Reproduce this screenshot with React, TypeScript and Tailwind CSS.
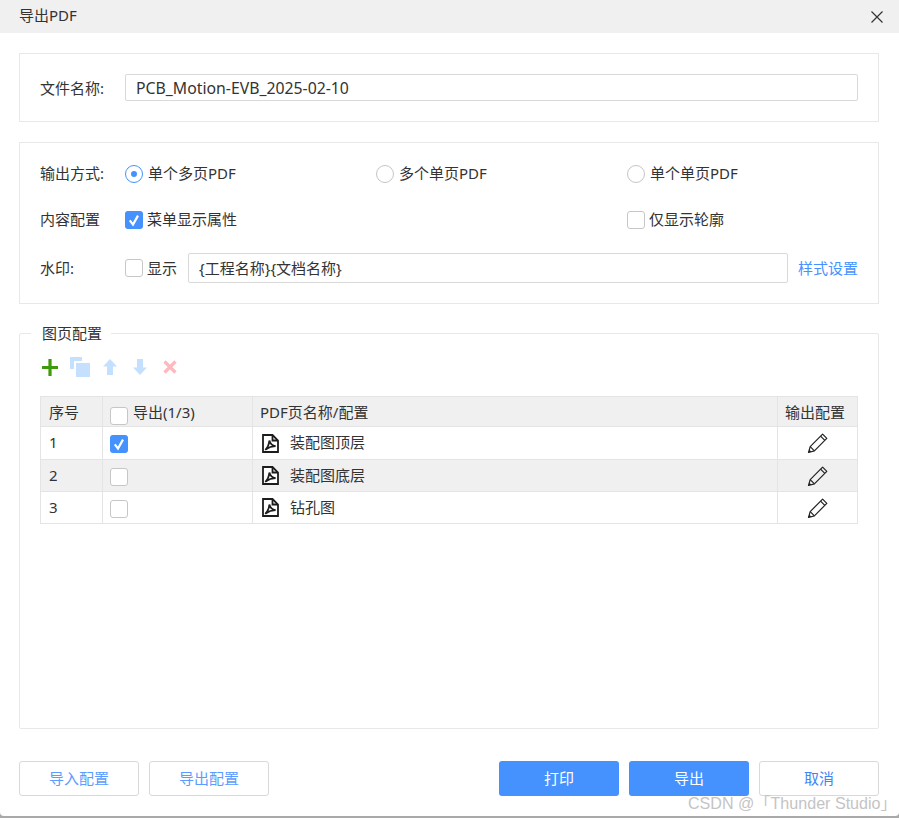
import React from "react";

const font = "font-['Noto_Sans','Noto_Sans_CJK_SC',sans-serif]";

const CheckBox = ({ checked = false }: { checked?: boolean }) =>
  checked ? (
    <span className="flex h-[18px] w-[18px] shrink-0 items-center justify-center rounded-[3px] bg-[#4592ff]">
      <svg width="14" height="14" viewBox="0 0 14 14" fill="none">
        <path d="M2.8 7.4 L6 11.6 L11 2.6" stroke="#fff" strokeWidth="2.2" />
      </svg>
    </span>
  ) : (
    <span className="block h-[18px] w-[18px] shrink-0 rounded-[3px] border border-[#c6c6c6] bg-white" />
  );

const Radio = ({ checked = false }: { checked?: boolean }) => (
  <span
    className={`flex h-[18px] w-[18px] shrink-0 items-center justify-center rounded-full border ${
      checked ? "border-[#4592ff]" : "border-[#c6c6c6]"
    }`}
  >
    {checked && <span className="h-1.5 w-1.5 rounded-full bg-[#4592ff]" />}
  </span>
);

const PdfIcon = () => (
  <svg width="17" height="19" viewBox="0 0 17 19" fill="none" className="shrink-0">
    <path d="M1 1 H10.5 L16 6.5 V18 H1 Z" stroke="#1c1c1c" strokeWidth="1.8" fill="#fff" />
    <path d="M10.5 1 V6.5 H16" stroke="#1c1c1c" strokeWidth="1.8" />
    <path
      d="M3.2 15.8 C5.2 14 7 10.5 7.4 6.5 C8.2 9.8 9.8 11.6 13.6 12.2 C10.4 12.2 6.6 13.4 3.2 15.8 Z"
      stroke="#1c1c1c"
      strokeWidth="1.8"
    />
  </svg>
);

const PencilIcon = () => (
  <svg width="22" height="22" viewBox="0 0 22 22" fill="none">
    <path d="M1.5 20.5 L3.2 14.6 L15.6 2.2 L19.8 6.4 L7.4 18.8 Z" stroke="#222" strokeWidth="1.2" strokeLinejoin="round" />
    <path d="M13.6 4.2 L17.8 8.4 M3.2 14.6 L7.4 18.8" stroke="#222" strokeWidth="1.2" />
    <path d="M1.5 20.5 L2.3 17.6 L4.4 19.7 Z" fill="#222" />
  </svg>
);

const Btn = ({ label, primary = false, strong = false }: { label: string; primary?: boolean; strong?: boolean }) => (
  <button
    className={`h-[35px] w-[120px] rounded-[3px] pb-px text-[15px] ${
      primary
        ? "bg-[#4592ff] text-white"
        : `border border-[#d9d9d9] bg-white ${strong ? "text-[#3f86f5]" : "text-[#5c9bff]"}`
    }`}
  >
    {label}
  </button>
);

const rows = [
  { no: 1, name: "装配图顶层", on: true, h: "h-[33px]", bg: "bg-white" },
  { no: 2, name: "装配图底层", on: false, h: "h-[32px]", bg: "bg-[#f0f0f0]" },
  { no: 3, name: "钻孔图", on: false, h: "h-[32px]", bg: "bg-white" },
];

export default function App() {
  return (
    <div className={`${font} h-[818px] w-[899px] overflow-hidden bg-[#a9a9a9] text-[15px] leading-5 text-[#333]`}>
      <div className="relative h-[816px] rounded-b-[4px] bg-white">
        <div className="flex h-[33px] items-center justify-between bg-[#f0f0f0] pl-[19px] pr-[15px]">
          <span className="pb-1">导出PDF</span>
          <svg width="14" height="14" viewBox="0 0 14 14" fill="none">
            <path d="M1.5 1.5 L12.5 12.5 M12.5 1.5 L1.5 12.5" stroke="#333" strokeWidth="1.2" />
          </svg>
        </div>

        <div className="pl-[19px] pr-5">
          <section className="mt-5 flex h-[69px] items-center border border-[#e8e8e8] px-5">
            <span className="w-[85px] shrink-0">文件名称:</span>
            <div className="flex h-[27px] flex-1 items-center rounded-[2px] border border-[#d9d9d9] px-[10px] text-[15.8px]">
              PCB_Motion-EVB_2025-02-10
            </div>
          </section>

          <section className="mt-5 h-[162px] border border-[#e8e8e8] px-5 pt-[22px]">
            <div className="flex h-[18px] items-center">
              <span className="w-[85px] shrink-0 pb-[2px]">输出方式:</span>
              <label className="flex w-[251px] items-center gap-[5px]"><Radio checked /><span className="pb-[2px]">单个多页PDF</span></label>
              <label className="flex w-[251px] items-center gap-[5px]"><Radio /><span className="pb-[2px]">多个单页PDF</span></label>
              <label className="flex items-center gap-[5px]"><Radio /><span className="pb-[2px]">单个单页PDF</span></label>
            </div>
            <div className="mt-7 flex h-[18px] items-center">
              <span className="w-[85px] shrink-0 pb-[2px]">内容配置</span>
              <label className="flex w-[502px] items-center gap-1"><CheckBox checked /><span className="pb-[2px]">菜单显示属性</span></label>
              <label className="flex items-center gap-1"><CheckBox /><span className="pb-[2px]">仅显示轮廓</span></label>
            </div>
            <div className="mt-6 flex h-[30px] items-center">
              <span className="w-[85px] shrink-0">水印:</span>
              <label className="flex w-[63px] shrink-0 items-center gap-1"><CheckBox />显示</label>
              <div className="flex h-[30px] flex-1 items-center rounded-[2px] border border-[#d9d9d9] px-2.5">
                {"{工程名称}{文档名称}"}
              </div>
              <a className="ml-2.5 text-[#4592ff]">样式设置</a>
            </div>
          </section>

          <fieldset className="mt-[19px] h-[406px] rounded-[2px] border border-[#e8e8e8] px-5">
            <legend className="-ml-[9px] pl-[11px] pr-[9px] leading-5">图页配置</legend>
            <div className="mt-[14px] flex h-[20px] items-center pl-[2px]">
              <svg width="16" height="17" viewBox="0 0 16 17" className="mr-3">
                <path d="M6.4 0 H9.6 V6.9 H16 V10.1 H9.6 V17 H6.4 V10.1 H0 V6.9 H6.4 Z" fill="#3f9a0b" />
              </svg>
              <svg width="20" height="20" viewBox="0 0 20 20" className="mr-[13px]">
                <path d="M0 0 H12 V4 H4 V12 H0 Z" fill="#c5e0ff" />
                <rect x="6" y="6" width="14" height="14" fill="#c5e0ff" />
              </svg>
              <svg width="14" height="16" viewBox="0 0 14 16" className="mr-4">
                <path d="M7 0 L14 7.5 H10 V16 H4 V7.5 H0 Z" fill="#c5e0ff" />
              </svg>
              <svg width="14" height="16" viewBox="0 0 14 16" className="mr-4">
                <path d="M7 16 L14 8.5 H10 V0 H4 V8.5 H0 Z" fill="#c5e0ff" />
              </svg>
              <svg width="14" height="14" viewBox="0 0 14 14">
                <path d="M1.5 1.5 L12.5 12.5 M12.5 1.5 L1.5 12.5" stroke="#ffb8bd" strokeWidth="3.2" />
              </svg>
            </div>

            <table className="mt-[19px] w-[817px] table-fixed border-collapse">
              <colgroup>
                <col className="w-[62px]" />
                <col className="w-[150px]" />
                <col className="w-[525px]" />
                <col className="w-[80px]" />
              </colgroup>
              <thead>
                <tr className="h-[30px] bg-[#f0f0f0] text-left">
                  <th className="border border-[#e4e4e4] pl-2 font-normal">序号</th>
                  <th className="border border-[#e4e4e4] pl-[7px] font-normal">
                    <span className="flex h-5 items-start gap-[5px]">
                      <span className="mt-[5px]"><CheckBox /></span>
                      <span>导出(1/3)</span>
                    </span>
                  </th>
                  <th className="border border-[#e4e4e4] pl-[7px] font-normal">PDF页名称/配置</th>
                  <th className="border border-[#e4e4e4] pl-[7px] font-normal">输出配置</th>
                </tr>
              </thead>
              <tbody>
                {rows.map((r) => (
                  <tr key={r.no} className={`${r.h} ${r.bg}`}>
                    <td className="border border-[#e4e4e4] pb-[2px] pl-2">{r.no}</td>
                    <td className="border border-[#e4e4e4] pl-[7px]">
                      <span className="block pt-[2px]"><CheckBox checked={r.on} /></span>
                    </td>
                    <td className="border border-[#e4e4e4] pl-[9px]">
                      <span className="flex items-center gap-[11px]"><PdfIcon /><span className="pb-[2px]">{r.name}</span></span>
                    </td>
                    <td className="border border-[#e4e4e4]">
                      <span className="flex justify-center"><PencilIcon /></span>
                    </td>
                  </tr>
                ))}
              </tbody>
            </table>
          </fieldset>

          <div className="mt-8 flex gap-2.5">
            <Btn label="导入配置" />
            <Btn label="导出配置" />
            <div className="ml-auto flex gap-2.5">
              <Btn label="打印" primary />
              <Btn label="导出" primary />
              <Btn label="取消" strong />
            </div>
          </div>
        </div>

        <span className="absolute left-[688px] top-[793px] whitespace-nowrap font-['Liberation_Sans','Noto_Sans_CJK_SC',sans-serif] text-[16.1px] text-[#c4c4c4]">
          CSDN @「Thunder Studio」
        </span>
      </div>
    </div>
  );
}
